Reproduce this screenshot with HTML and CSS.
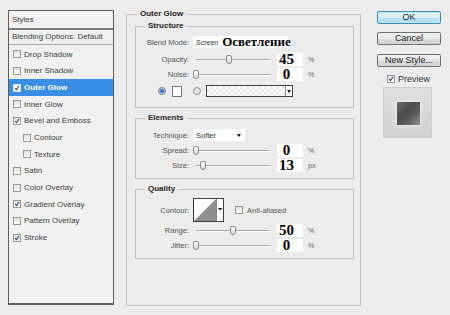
FILE: index.html
```html
<!DOCTYPE html>
<html lang="ru">
<head>
  <meta charset="UTF-8">
  <title>Layer Style - Outer Glow</title>
  <link rel="stylesheet" href="styles.css">
</head>
<body>
  <div class="dialog">

    <!-- Styles list -->
    <div class="styles-panel">
      <div class="panel-head">Styles</div>
      <div class="panel-blend">Blending Options: Default</div>
      <ul class="style-list">
        <li><span class="cb"></span>Drop Shadow</li>
        <li><span class="cb"></span>Inner Shadow</li>
        <li class="selected"><span class="cb"><svg viewBox="0 0 8 8"><path d="M1.6 4.2 3.3 6.2 6.6 1.4"/></svg></span>Outer Glow</li>
        <li><span class="cb"></span>Inner Glow</li>
        <li><span class="cb"><svg viewBox="0 0 8 8"><path d="M1.6 4.2 3.3 6.2 6.6 1.4"/></svg></span>Bevel and Emboss</li>
        <li class="sub"><span class="cb"></span>Contour</li>
        <li class="sub"><span class="cb"></span>Texture</li>
        <li><span class="cb"></span>Satin</li>
        <li><span class="cb"></span>Color Overlay</li>
        <li><span class="cb"><svg viewBox="0 0 8 8"><path d="M1.6 4.2 3.3 6.2 6.6 1.4"/></svg></span>Gradient Overlay</li>
        <li><span class="cb"></span>Pattern Overlay</li>
        <li><span class="cb"><svg viewBox="0 0 8 8"><path d="M1.6 4.2 3.3 6.2 6.6 1.4"/></svg></span>Stroke</li>
      </ul>
    </div>

    <!-- Outer Glow settings -->
    <fieldset class="group main">
      <legend>Outer Glow</legend>

      <fieldset class="group sub structure">
        <legend>Structure</legend>
        <div class="row r-blend">
          <span class="lbl">Blend Mode:</span>
          <div class="select blend"><span class="small">Screen</span><span class="ru">Осветление</span></div>
        </div>
        <div class="row r-opacity">
          <span class="lbl">Opacity:</span>
          <div class="slider"><div class="track"><span class="thumb" style="left:45%"></span></div></div>
          <div class="num">45</div><span class="unit">%</span>
        </div>
        <div class="row r-noise">
          <span class="lbl">Noise:</span>
          <div class="slider"><div class="track"><span class="thumb" style="left:0%"></span></div></div>
          <div class="num">0</div><span class="unit">%</span>
        </div>
        <div class="row r-color">
          <span class="radio on"></span>
          <span class="swatch"></span>
          <span class="radio"></span>
          <div class="grad"><span class="grad-btn"><span class="tri"></span></span></div>
        </div>
      </fieldset>

      <fieldset class="group sub elements">
        <legend>Elements</legend>
        <div class="row r-tech">
          <span class="lbl">Technique:</span>
          <div class="select tech"><span>Softer</span><span class="tri"></span></div>
        </div>
        <div class="row r-spread">
          <span class="lbl">Spread:</span>
          <div class="slider"><div class="track"><span class="thumb" style="left:0%"></span></div></div>
          <div class="num">0</div><span class="unit">%</span>
        </div>
        <div class="row r-size">
          <span class="lbl">Size:</span>
          <div class="slider"><div class="track"><span class="thumb" style="left:10%"></span></div></div>
          <div class="num">13</div><span class="unit">px</span>
        </div>
      </fieldset>

      <fieldset class="group sub quality">
        <legend>Quality</legend>
        <div class="row r-contour">
          <span class="lbl">Contour:</span>
          <svg class="contour" width="31" height="24" viewBox="0 0 31 24">
            <rect x="0.5" y="0.5" width="30" height="23" fill="#fff" stroke="#3c3c3c"/>
            <path d="M1 23 L23 1 L23 23 Z" fill="#8e8e8e"/>
            <line x1="23.5" y1="1" x2="23.5" y2="23" stroke="#8a8a8a"/>
            <path d="M25 10 h4.5 l-2.25 2.6 z" fill="#1e1e1e"/>
          </svg>
          <span class="cb aa"></span><span class="aa-text">Anti-aliased</span>
        </div>
        <div class="row r-range">
          <span class="lbl">Range:</span>
          <div class="slider"><div class="track"><span class="thumb" style="left:50%"></span></div></div>
          <div class="num">50</div><span class="unit">%</span>
        </div>
        <div class="row r-jitter">
          <span class="lbl">Jitter:</span>
          <div class="slider"><div class="track"><span class="thumb" style="left:0%"></span></div></div>
          <div class="num">0</div><span class="unit">%</span>
        </div>
      </fieldset>
    </fieldset>

    <!-- Buttons and preview -->
    <div class="side">
      <button class="btn btn-ok">OK</button>
      <button class="btn btn-cancel">Cancel</button>
      <button class="btn btn-new">New Style...</button>
      <div class="preview-row"><span class="cb"><svg viewBox="0 0 8 8"><path d="M1.6 4.2 3.3 6.2 6.6 1.4"/></svg></span>Preview</div>
      <div class="preview-box"><div class="preview-square"></div></div>
    </div>

  </div>
</body>
</html>
```

FILE: styles.css
```css
* {
  box-sizing: border-box;
}

html, body {
  margin: 0;
  padding: 0;
  width: 450px;
  height: 315px;
  overflow: hidden;
  background: #ececec;
  font-family: "Liberation Sans", Arial, sans-serif;
  font-size: 7.5px;
  color: #555;
}

.dialog {
  display: flex;
  align-items: flex-start;
  height: 315px;
}

/* ---- styles list ---- */
.styles-panel {
  width: 106px;
  height: 295px;
  margin: 10px 0 0 8px;
  border: 1px solid #5e5e5e;
  border-bottom-width: 2px;
  background: #f1f1f1;
  font-size: 8px;
  color: #3e3e3e;
}

.panel-head {
  height: 19px;
  line-height: 17px;
  padding-left: 3px;
  border-bottom: 2px solid #7a7a7a;
}

.panel-blend {
  height: 15px;
  line-height: 14px;
  padding-left: 3px;
  border-bottom: 1px solid #a8a8a8;
}

.style-list {
  list-style: none;
  margin: 0;
  padding: 1px 0 0;
}

.style-list li {
  height: 16.67px;
  display: flex;
  align-items: center;
  padding-left: 4px;
}

.style-list li.sub {
  padding-left: 14px;
}

.style-list li.selected {
  background: #3a8fe5;
  color: #fff;
  font-weight: bold;
}

.cb {
  width: 8px;
  height: 8px;
  flex: none;
  margin-right: 3px;
  border: 1px solid #9a9a9a;
  background: linear-gradient(#e2e2e2, #fbfbfb);
  display: flex;
}

.cb svg {
  width: 100%;
  height: 100%;
  fill: none;
  stroke: #2d4168;
  stroke-width: 1.4;
}

.selected .cb {
  background: #fff;
  border-color: #cfe3f7;
}

/* ---- group boxes ---- */
.group {
  margin: 0;
  min-width: 0;
  border: 1px solid #c2c2c2;
}

.group legend {
  padding: 0 3px;
  font-size: 8px;
  font-weight: bold;
  line-height: 10px;
  color: #262626;
}

.main {
  width: 235px;
  margin: 9px 0 0 12px;
  padding: 2px 6px 46px 8px;
}

.main > legend {
  margin-left: 2px;
}

.sub {
  padding: 0;
}

.sub > legend {
  margin-left: 9px;
}

.structure {
  padding: 5px 0 10px;
}

.elements {
  margin-top: 5px;
  padding: 6px 0 6px;
}

.quality {
  margin-top: 5px;
  padding: 4px 0 6px;
}

/* ---- rows ---- */
.row {
  display: flex;
  align-items: center;
  height: 13px;
}

.lbl {
  width: 53px;
  margin-right: 4px;
  text-align: right;
  white-space: nowrap;
}

.r-blend { height: 12px; }
.r-opacity { margin-top: 5px; }
.r-noise { margin-top: 2px; }
.r-color { margin-top: 4px; height: 12px; padding-left: 22px; }
.r-tech { height: 12px; }
.r-spread { margin-top: 3px; }
.r-size { margin-top: 2px; }
.r-contour { height: 24px; }
.r-range { margin-top: 2px; }
.r-jitter { margin-top: 2px; }

.select {
  height: 12px;
  background: #fff;
  display: flex;
  align-items: center;
  padding-left: 3px;
  white-space: nowrap;
  color: #333;
}

.blend {
  width: 95px;
}

.blend .small {
  font-size: 7px;
}

.blend .ru {
  margin-left: 4px;
  font-family: "Liberation Serif", "Times New Roman", serif;
  font-size: 13px;
  font-weight: bold;
  color: #000;
  line-height: 12px;
}

.tech {
  width: 52px;
}

.tech .tri {
  margin-left: auto;
  margin-right: 4px;
}

.tri {
  width: 0;
  height: 0;
  border-left: 2.5px solid transparent;
  border-right: 2.5px solid transparent;
  border-top: 3px solid #111;
}

/* ---- sliders ---- */
.slider {
  width: 81px;
  padding: 0 4px 0 3px;
}

.track {
  position: relative;
  height: 2px;
  border-top: 1px solid #a9a9a9;
  border-bottom: 1px solid #fbfbfb;
}

.thumb {
  position: absolute;
  top: -5px;
  width: 6px;
  height: 9px;
  margin-left: -3px;
  border: 1px solid #8c8c8c;
  border-radius: 2px 2px 3px 3px;
  background: linear-gradient(#fdfdfd, #dadada);
}

.num {
  width: 26px;
  height: 13px;
  margin-left: 3px;
  padding-right: 7px;
  background: #fff;
  text-align: center;
  font-family: "Liberation Serif", "Times New Roman", serif;
  font-size: 15px;
  font-weight: bold;
  line-height: 13px;
  color: #000;
}

.unit {
  margin-left: 5px;
  font-size: 7px;
  color: #666;
}

/* ---- colour row ---- */
.radio {
  width: 8px;
  height: 8px;
  flex: none;
  border-radius: 50%;
  border: 1px solid #999;
  background: radial-gradient(circle, #f2f2f2, #cfcfcf);
}

.radio.on {
  border-color: #7e7e7e;
  background: radial-gradient(circle, #1f5a9c 0, #3f86cc 1.6px, #a9c8e6 2.4px, #e6e6e6 3.2px);
}

.swatch {
  width: 10px;
  height: 11px;
  margin: 0 11px 0 6px;
  border: 1px solid #7a7a7a;
  background: #fff;
}

.r-color .radio + .grad {
  margin-left: 5px;
}

.grad {
  width: 87px;
  height: 12px;
  border: 1px solid #3e3e3e;
  background: repeating-conic-gradient(#e9e9e9 0 25%, #fff 0 50%) 0 0 / 6px 6px;
  display: flex;
  justify-content: flex-end;
}

.grad-btn {
  width: 7px;
  border-left: 1px solid #8a8a8a;
  background: #fff;
  display: flex;
  align-items: center;
  justify-content: center;
}

/* ---- quality ---- */
.contour {
  display: block;
  flex: none;
}

.cb.aa {
  margin: 0 4px 0 11px;
}

.aa-text {
  color: #555;
}

/* ---- right column ---- */
.side {
  width: 64px;
  margin-left: 16px;
  display: flex;
  flex-direction: column;
}

.btn {
  height: 13px;
  padding: 0;
  border: 1px solid #707070;
  border-radius: 2px;
  background: linear-gradient(#f3f3f3, #e8e8e8 50%, #dcdcdc 51%, #d2d2d2);
  font-family: "Liberation Sans", Arial, sans-serif;
  font-size: 9px;
  line-height: 11px;
  color: #222;
  text-align: center;
}

.btn-ok {
  margin-top: 11px;
  border-color: #3d8ac2;
  background: linear-gradient(#e9f6fd, #d6effc 50%, #bde4f9 51%, #aedbf3);
  box-shadow: inset 0 0 0 1px #c6ecfc;
}

.btn-cancel {
  margin-top: 8px;
}

.btn-new {
  margin-top: 9px;
}

.preview-row {
  height: 12px;
  margin-top: 6px;
  padding-left: 10px;
  display: flex;
  align-items: center;
  font-size: 9px;
  color: #333;
}

.preview-box {
  width: 49px;
  height: 51px;
  margin: 2px 0 0 6px;
  border: 1px solid #cdcdcd;
  background: linear-gradient(#dedede, #d2d2d2);
  display: flex;
  align-items: center;
  justify-content: center;
  padding: 1px 0 0 2px;
}

.preview-square {
  width: 23px;
  height: 23px;
  background: linear-gradient(135deg, #6d6d6d, #4b4b4b 40%, #5c5c5c 65%, #959595);
  box-shadow: 0 0 4px 1px #ececec;
}
```
